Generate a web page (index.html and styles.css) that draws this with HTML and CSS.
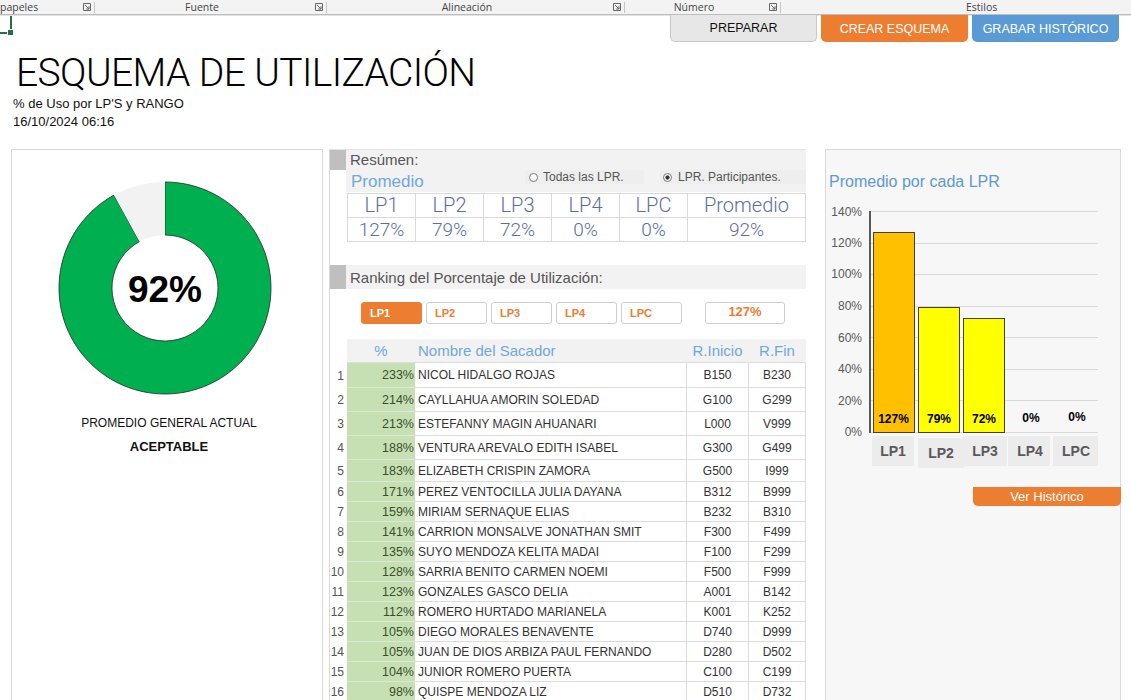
FILE: index.html
```html
<!DOCTYPE html>
<html lang="es">
<head>
<meta charset="utf-8">
<title>Esquema de Utilización</title>
<link rel="stylesheet" href="styles.css">
</head>
<body>
<div class="ribbon">
  <div class="grp g1"><span class="glabel gl-left">papeles</span><svg class="launch" viewBox="0 0 8 8"><path d="M0.5 0.5H7.5V7.5H0.5Z M2 2L6 6 M6 3.2V6H3.2"/></svg><span class="gsep"></span></div>
  <div class="grp g2"><span class="glabel">Fuente</span><svg class="launch" viewBox="0 0 8 8"><path d="M0.5 0.5H7.5V7.5H0.5Z M2 2L6 6 M6 3.2V6H3.2"/></svg><span class="gsep"></span></div>
  <div class="grp g3"><span class="glabel">Alineación</span><svg class="launch" viewBox="0 0 8 8"><path d="M0.5 0.5H7.5V7.5H0.5Z M2 2L6 6 M6 3.2V6H3.2"/></svg><span class="gsep"></span></div>
  <div class="grp g4"><span class="glabel">Número</span><svg class="launch" viewBox="0 0 8 8"><path d="M0.5 0.5H7.5V7.5H0.5Z M2 2L6 6 M6 3.2V6H3.2"/></svg><span class="gsep"></span></div>
  <div class="grp g5"><span class="glabel gl-styles">Estilos</span></div>
</div>

<div class="toolbar">
  <div class="cellsel"></div>
  <div class="actions">
    <button class="act act-prep">PREPARAR</button>
    <button class="act act-crear">CREAR ESQUEMA</button>
    <button class="act act-grabar">GRABAR HISTÓRICO</button>
  </div>
</div>

<header class="heading">
  <h1 class="title">ESQUEMA DE UTILIZACIÓN</h1>
  <p class="sub sub-first">% de Uso por LP'S y RANGO</p>
  <p class="sub">16/10/2024 06:16</p>
</header>

<main class="dash">
  <section class="card gauge">
    <svg class="donut" width="214" height="214" viewBox="0 0 214 214">
      <path class="d-fill" d="M107 1 A106 106 0 1 1 55.93 14.11 L81.46 60.56 A53 53 0 1 0 107 54 Z"/>
      <path class="d-rest" d="M55.93 14.11 A106 106 0 0 1 107 1 L107 54 A53 53 0 0 0 81.46 60.56 Z"/>
      <text class="d-val" x="107" y="108">92%</text>
    </svg>
    <p class="g-cap">PROMEDIO GENERAL ACTUAL</p>
    <p class="g-state">ACEPTABLE</p>
  </section>

  <section class="mid">
    <div class="sec-head"><span class="sec-tab"></span><span class="sec-label">Resúmen:</span></div>
    <div class="prom-row">
      <span class="prom-label">Promedio</span>
      <div class="radios">
        <span class="radio r1"><span class="rdot"></span>Todas las LPR.</span>
        <span class="radio r2"><span class="rdot on"></span>LPR. Participantes.</span>
      </div>
    </div>
    <div class="sum">
      <span class="sh">LP1</span><span class="sh">LP2</span><span class="sh">LP3</span><span class="sh">LP4</span><span class="sh">LPC</span><span class="sh">Promedio</span>
      <span class="sv">127%</span><span class="sv">79%</span><span class="sv">72%</span><span class="sv">0%</span><span class="sv">0%</span><span class="sv">92%</span>
    </div>

    <div class="sec-head sec-rank"><span class="sec-tab"></span><span class="sec-label">Ranking del Porcentaje de Utilización:</span></div>
    <div class="lp-tabs">
      <button class="lp lp-on">LP1</button>
      <button class="lp">LP2</button>
      <button class="lp">LP3</button>
      <button class="lp">LP4</button>
      <button class="lp">LPC</button>
      <span class="lp-total">127%</span>
    </div>

    <table class="rank">
      <colgroup><col class="c-n"><col class="c-p"><col class="c-name"><col class="c-ri"><col class="c-rf"></colgroup>
      <thead>
        <tr><th class="n"></th><th class="p">%</th><th class="nm">Nombre del Sacador</th><th class="r">R.Inicio</th><th class="r">R.Fin</th></tr>
      </thead>
      <tbody>
        <tr class="first"><td class="n">1</td><td class="p">233%</td><td class="nm">NICOL HIDALGO ROJAS</td><td class="r">B150</td><td class="r">B230</td></tr>
        <tr class="tall"><td class="n">2</td><td class="p">214%</td><td class="nm">CAYLLAHUA AMORIN SOLEDAD</td><td class="r">G100</td><td class="r">G299</td></tr>
        <tr class="tall"><td class="n">3</td><td class="p">213%</td><td class="nm">ESTEFANNY MAGIN AHUANARI</td><td class="r">L000</td><td class="r">V999</td></tr>
        <tr class="tall"><td class="n">4</td><td class="p">188%</td><td class="nm">VENTURA AREVALO EDITH ISABEL</td><td class="r">G300</td><td class="r">G499</td></tr>
        <tr class="mid-h"><td class="n">5</td><td class="p">183%</td><td class="nm">ELIZABETH CRISPIN ZAMORA</td><td class="r">G500</td><td class="r">I999</td></tr>
        <tr><td class="n">6</td><td class="p">171%</td><td class="nm">PEREZ VENTOCILLA JULIA DAYANA</td><td class="r">B312</td><td class="r">B999</td></tr>
        <tr><td class="n">7</td><td class="p">159%</td><td class="nm">MIRIAM SERNAQUE ELIAS</td><td class="r">B232</td><td class="r">B310</td></tr>
        <tr><td class="n">8</td><td class="p">141%</td><td class="nm">CARRION MONSALVE JONATHAN SMIT</td><td class="r">F300</td><td class="r">F499</td></tr>
        <tr><td class="n">9</td><td class="p">135%</td><td class="nm">SUYO MENDOZA KELITA MADAI</td><td class="r">F100</td><td class="r">F299</td></tr>
        <tr><td class="n">10</td><td class="p">128%</td><td class="nm">SARRIA BENITO CARMEN NOEMI</td><td class="r">F500</td><td class="r">F999</td></tr>
        <tr><td class="n">11</td><td class="p">123%</td><td class="nm">GONZALES GASCO DELIA</td><td class="r">A001</td><td class="r">B142</td></tr>
        <tr><td class="n">12</td><td class="p">112%</td><td class="nm">ROMERO HURTADO MARIANELA</td><td class="r">K001</td><td class="r">K252</td></tr>
        <tr><td class="n">13</td><td class="p">105%</td><td class="nm">DIEGO MORALES BENAVENTE</td><td class="r">D740</td><td class="r">D999</td></tr>
        <tr><td class="n">14</td><td class="p">105%</td><td class="nm">JUAN DE DIOS ARBIZA PAUL FERNANDO</td><td class="r">D280</td><td class="r">D502</td></tr>
        <tr><td class="n">15</td><td class="p">104%</td><td class="nm">JUNIOR ROMERO PUERTA</td><td class="r">C100</td><td class="r">C199</td></tr>
        <tr><td class="n">16</td><td class="p">98%</td><td class="nm">QUISPE MENDOZA LIZ</td><td class="r">D510</td><td class="r">D732</td></tr>
      </tbody>
    </table>
  </section>

  <section class="card chart">
    <h2 class="chart-title">Promedio por cada LPR</h2>
    <svg class="bars" width="294" height="272" viewBox="1 0 294 272">
      <g class="grid">
        <line x1="45" x2="273" y1="11.5" y2="11.5"/>
        <line x1="45" x2="273" y1="43.5" y2="43.5"/>
        <line x1="45" x2="273" y1="74.5" y2="74.5"/>
        <line x1="45" x2="273" y1="106.5" y2="106.5"/>
        <line x1="45" x2="273" y1="137.5" y2="137.5"/>
        <line x1="45" x2="273" y1="169.5" y2="169.5"/>
        <line x1="45" x2="273" y1="200.5" y2="200.5"/>
        <line x1="45" x2="273" y1="232.5" y2="232.5"/>
      </g>
      <g class="ylab">
        <text x="37" y="12">140%</text>
        <text x="37" y="43">120%</text>
        <text x="37" y="74">100%</text>
        <text x="37" y="106">80%</text>
        <text x="37" y="138">60%</text>
        <text x="37" y="169">40%</text>
        <text x="37" y="201">20%</text>
        <text x="37" y="232">0%</text>
      </g>
      <line class="axis" x1="45" x2="45" y1="11" y2="233"/>
      <rect class="bar b1" x="48.5" y="32.5" width="41" height="200"/>
      <rect class="bar b2" x="93.5" y="107.5" width="41" height="125"/>
      <rect class="bar b3" x="138.5" y="118.5" width="41" height="114"/>
      <g class="dlab">
        <text x="68.5" y="223">127%</text>
        <text x="114" y="223">79%</text>
        <text x="159" y="223">72%</text>
        <text x="206" y="222">0%</text>
        <text x="252" y="221">0%</text>
      </g>
      <g class="cat">
        <rect x="47" y="236" width="42" height="30"/>
        <rect x="93" y="238" width="46" height="30"/>
        <rect x="138" y="236" width="44" height="30"/>
        <rect x="183" y="236" width="42" height="30"/>
        <rect x="228" y="236" width="45" height="30"/>
        <text x="68" y="251">LP1</text>
        <text x="116" y="253">LP2</text>
        <text x="160" y="251">LP3</text>
        <text x="205" y="251">LP4</text>
        <text x="251" y="251">LPC</text>
      </g>
    </svg>
    <div class="chart-foot"><button class="hist">Ver Histórico</button></div>
  </section>
</main>
</body>
</html>
```

FILE: styles.css
```css
* { box-sizing: border-box; }
html, body { margin: 0; padding: 0; }
body {
  width: 1131px;
  height: 700px;
  overflow: hidden;
  background: #ffffff;
  font-family: "Liberation Sans", Arial, sans-serif;
  color: #222;
}
button { font-family: inherit; cursor: pointer; }

/* ---------- ribbon ---------- */
.ribbon {
  display: flex;
  height: 15px;
  background: #f3f3f3;
  border-bottom: 1px solid #bdbdbd;
  box-shadow: 0 1px 0 #e3e3e3;
  font-family: "Open Sans", "Liberation Sans", sans-serif;
  font-size: 10.5px;
  line-height: 14px;
  color: #444;
  overflow: hidden;
  white-space: nowrap;
}
.grp { display: flex; align-items: center; flex: none; }
.g1 { width: 95px; }
.g2 { width: 232px; }
.g3 { width: 298px; }
.g4 { width: 156px; }
.g5 { width: 350px; }
.glabel { flex: 1; text-align: center; padding-right: 6px; }
.gl-left { text-align: left; padding-right: 0; }
.gl-styles { text-align: left; padding-left: 185px; }
.launch { width: 8px; height: 8px; flex: none; margin-right: 3px; }
.launch path { fill: none; stroke: #666; stroke-width: 1; }
.gsep { width: 1px; height: 11px; background: #c6c6c6; flex: none; }

/* ---------- toolbar ---------- */
.toolbar { display: flex; align-items: flex-start; height: 28px; }
.cellsel {
  position: relative;
  width: 12px;
  height: 18px;
  margin-top: 1px;
  border-right: 2px solid #217346;
  border-bottom: 2px solid #217346;
}
.cellsel::after {
  content: "";
  position: absolute;
  right: -4px;
  bottom: -4px;
  width: 5px;
  height: 5px;
  background: #217346;
  border: 1px solid #fff;
}
.actions { display: flex; gap: 4px; margin-left: auto; margin-right: 12px; }
.act {
  width: 147px;
  height: 27px;
  border: none;
  border-radius: 0 0 5px 5px;
  font-size: 12.5px;
  color: #fff;
  padding: 0;
}
.act-prep { background: #e7e7e7; border: 1px solid #c8c8c8; border-top: none; color: #111; }
.act-crear { background: #ed7d31; }
.act-grabar { background: #5b9bd5; }

/* ---------- heading ---------- */
.heading { height: 106px; padding-top: 7px; }
.title {
  margin: 0 0 -1px 0;
  padding-left: 16px;
  font-family: "Roboto", "Liberation Sans", sans-serif;
  font-weight: 300;
  font-size: 39px;
  letter-spacing: -0.6px;
  line-height: 46px;
  color: #000;
}
.sub {
  margin: 0;
  padding-left: 13px;
  font-size: 13px;
  line-height: 18px;
  color: #111;
}

/* ---------- dashboard ---------- */
.dash { display: flex; padding-left: 11px; height: 551px; align-items: flex-start; }
.card { border: 1px solid #d9d9d9; height: 560px; flex: none; }

/* gauge */
.gauge { width: 312px; padding-top: 31px; background: #fff; }
.donut { display: block; margin-left: 46px; }
.d-fill { fill: #00b050; stroke: #262626; stroke-width: 0.8; }
.d-rest { fill: #f2f2f2; }
.d-val {
  font-family: "Liberation Sans", Arial, sans-serif;
  font-weight: 700;
  font-size: 37px;
  text-anchor: middle;
  dominant-baseline: central;
  fill: #000;
}
.g-cap {
  margin: 20px 0 0 0;
  padding-left: 4px;
  text-align: center;
  font-size: 12px;
  line-height: 16px;
  color: #111;
}
.g-state {
  margin: 8px 0 0 0;
  padding-left: 4px;
  text-align: center;
  font-size: 13px;
  font-weight: 700;
  line-height: 16px;
  color: #111;
}

/* middle */
.mid {
  width: 477px;
  height: 560px;
  margin-left: 6px;
  flex: none;
  border-left: 1px solid #d9d9d9;
  border-top: 1px solid #e4e4e4;
  display: flex;
  flex-direction: column;
}
.sec-head { display: flex; height: 20px; flex: none; }
.sec-tab { width: 16px; background: #bfbfbf; flex: none; }
.sec-label {
  flex: 1;
  background: #f2f2f2;
  padding-left: 4px;
  font-size: 15px;
  line-height: 20px;
  color: #555;
}
.sec-rank { height: 24px; margin-top: 23px; }
.sec-rank .sec-label { line-height: 26px; }

.prom-row {
  display: flex;
  height: 22px;
  margin-left: 16px;
  background: #f2f2f2;
  flex: none;
}
.prom-label {
  padding-left: 5px;
  font-size: 17px;
  line-height: 24px;
  color: #6fa8dc;
}
.radios { display: flex; gap: 16px; margin-left: auto; }
.radio {
  display: flex;
  align-items: center;
  height: 14px;
  font-size: 12px;
  color: #555;
  background: #eeeeee;
}
.r1 { width: 119px; padding-left: 4px; gap: 5px; }
.r2 { width: 146px; padding-left: 3px; gap: 6px; }
.rdot {
  width: 9px;
  height: 9px;
  border-radius: 50%;
  border: 1px solid #777;
  background: #fff;
  flex: none;
}
.rdot.on { background: radial-gradient(circle, #333 0 1.8px, #fff 2.4px); }

.sum {
  display: grid;
  grid-template-columns: repeat(5, 68px) 1fr;
  grid-auto-rows: 24px;
  margin: 1px 0 0 17px;
  border-top: 1px solid #d9d9d9;
  border-left: 1px solid #d9d9d9;
  flex: none;
}
.sh, .sv {
  border-right: 1px solid #d9d9d9;
  border-bottom: 1px solid #d9d9d9;
  text-align: center;
  font-family: "Roboto", "Liberation Sans", sans-serif;
  font-weight: 300;
  color: #5a6ea6;
}
.sh { font-size: 20px; line-height: 23px; }
.sv { font-size: 19px; line-height: 24px; }

.lp-tabs { display: flex; gap: 4px; height: 22px; margin: 13px 0 0 31px; flex: none; }
.lp {
  width: 61px;
  height: 22px;
  border: 1px solid #cfcfcf;
  border-radius: 3px;
  background: #fff;
  padding: 0 0 0 8px;
  text-align: left;
  font-size: 11px;
  font-weight: 700;
  color: #ed7d31;
}
.lp-on { background: #ed7d31; border-color: #ed7d31; color: #fff; }
.lp-total {
  width: 80px;
  height: 22px;
  margin-left: 19px;
  border: 1px solid #cfcfcf;
  border-radius: 3px;
  text-align: center;
  font-size: 13px;
  font-weight: 700;
  line-height: 18px;
  color: #ed7d31;
}

.rank {
  margin-top: 15px;
  width: 476px;
  table-layout: fixed;
  border-collapse: separate;
  border-spacing: 0;
  font-size: 12px;
  color: #333;
}
.c-n { width: 17px; }
.c-p { width: 68px; }
.c-name { width: 272px; }
.c-ri { width: 62px; }
.c-rf { width: 57px; }
.rank th {
  height: 24px;
  padding: 0;
  font-weight: 400;
  font-size: 15px;
  color: #6fa8dc;
  background: #f2f2f2;
  border-bottom: 1px solid #dcdcdc;
  text-align: center;
  white-space: nowrap;
}
.rank th.n { background: #fff; border-bottom: none; }
.rank th.nm { text-align: left; padding-left: 3px; }
.rank td {
  height: 20px;
  padding: 0;
  border-bottom: 1px solid #dcdcdc;
  white-space: nowrap;
  overflow: hidden;
}
.rank tr.first td { height: 25px; }
.rank tr.tall td { height: 24px; }
.rank tr.mid-h td { height: 22px; }
.rank td.n { border-bottom: none; text-align: right; padding-right: 3px; color: #555; }
.rank td.p {
  background: #c6e0b4;
  border-bottom-color: #dde8d5;
  text-align: right;
  padding-right: 1px;
  color: #3b4d2e;
  font-size: 12.5px;
}
.rank td.nm { padding-left: 3px; border-right: 1px solid #dcdcdc; }
.rank td.r { text-align: center; border-right: 1px solid #dcdcdc; }
.rank th.r { border-right: 1px solid #f2f2f2; }

/* chart */
.chart { width: 296px; margin-left: 19px; background: #f7f7f7; padding-top: 22px; }
.chart-title {
  margin: 0;
  padding-left: 3px;
  font-size: 16px;
  font-weight: 400;
  line-height: 20px;
  color: #5b9bd5;
}
.bars { display: block; margin-top: 8px; }
.grid line { stroke: #d9d9d9; stroke-width: 1; }
.axis { stroke: #595959; stroke-width: 2; }
.ylab text {
  font-family: "Liberation Sans", Arial, sans-serif;
  font-size: 12px;
  fill: #595959;
  text-anchor: end;
  dominant-baseline: central;
}
.bar { stroke: #404040; stroke-width: 1; }
.b1 { fill: #ffc000; }
.b2, .b3 { fill: #ffff00; }
.dlab text {
  font-family: "Liberation Sans", Arial, sans-serif;
  font-size: 12px;
  font-weight: 700;
  fill: #000;
  text-anchor: middle;
}
.cat rect { fill: #ececec; }
.cat text {
  font-family: "Liberation Sans", Arial, sans-serif;
  font-size: 14px;
  font-weight: 700;
  fill: #595959;
  text-anchor: middle;
  dominant-baseline: central;
}
.chart-foot { display: flex; justify-content: flex-end; margin-top: 15px; margin-right: -1px; }
.hist {
  width: 148px;
  height: 19px;
  border: none;
  border-radius: 0 0 5px 5px;
  background: #ed7d31;
  color: #fff;
  font-size: 13px;
  padding: 0;
}
```
